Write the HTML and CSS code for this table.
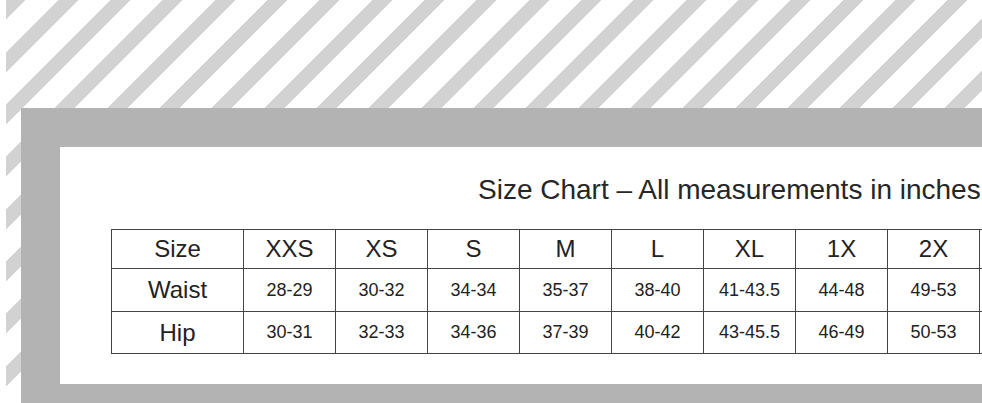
FILE: index.html
```html
<!DOCTYPE html>
<html lang="en">
<head>
<meta charset="utf-8">
<title>Size Chart</title>
<link rel="stylesheet" href="styles.css">
</head>
<body>
<div class="canvas">
  <div class="frame">
    <div class="panel">
      <h1 class="title">Size Chart – All measurements in inches</h1>
      <table class="chart">
        <colgroup>
          <col class="c-label">
          <col class="c-size"><col class="c-size"><col class="c-size"><col class="c-size"><col class="c-size">
          <col class="c-size"><col class="c-size"><col class="c-size"><col class="c-size">
        </colgroup>
        <tr class="r-head">
          <th>Size</th><th>XXS</th><th>XS</th><th>S</th><th>M</th><th>L</th><th>XL</th><th>1X</th><th>2X</th><th></th>
        </tr>
        <tr class="r-waist">
          <th>Waist</th><td>28-29</td><td>30-32</td><td>34-34</td><td>35-37</td><td>38-40</td><td>41-43.5</td><td>44-48</td><td>49-53</td><td></td>
        </tr>
        <tr class="r-hip">
          <th>Hip</th><td>30-31</td><td>32-33</td><td>34-36</td><td>37-39</td><td>40-42</td><td>43-45.5</td><td>46-49</td><td>50-53</td><td></td>
        </tr>
      </table>
    </div>
  </div>
</div>
</body>
</html>
```
FILE: styles.css
```css
html, body {
  margin: 0;
  padding: 0;
  background: #ffffff;
  overflow: hidden;
  width: 982px;
  height: 403px;
}

.canvas {
  margin-left: 6px;
  height: 403px;
  padding-top: 108px;
  box-sizing: border-box;
  background: repeating-linear-gradient(
    135deg,
    #d2d2d2 0px,
    #d2d2d2 14px,
    #ffffff 14px,
    #ffffff 37px
  );
}

.frame {
  margin-left: 15px;
  background: #b3b3b3;
  padding: 39px 0 19px 39px;
  height: 295px;
  box-sizing: border-box;
}

.panel {
  background: #ffffff;
  height: 237px;
  padding-top: 27px;
  padding-left: 51px;
  box-sizing: border-box;
  overflow: hidden;
}

.title {
  margin: 0 0 23px 367px;
  font-family: "Liberation Sans", Arial, sans-serif;
  font-weight: normal;
  font-size: 28px;
  line-height: 32px;
  color: #262626;
  white-space: nowrap;
}

.chart {
  border-collapse: collapse;
  table-layout: fixed;
  width: 960px;
  font-family: "Liberation Sans", Arial, sans-serif;
  color: #222222;
}

.c-label { width: 132px; }
.c-size { width: 92px; }

.chart th,
.chart td {
  border: 1px solid #444444;
  padding: 0;
  text-align: center;
  white-space: nowrap;
  overflow: hidden;
}

.chart th {
  font-weight: normal;
  font-size: 24px;
}

.chart td {
  font-size: 18px;
}

.r-head { height: 39px; }
.r-waist { height: 43px; }
.r-hip { height: 42px; }
```
